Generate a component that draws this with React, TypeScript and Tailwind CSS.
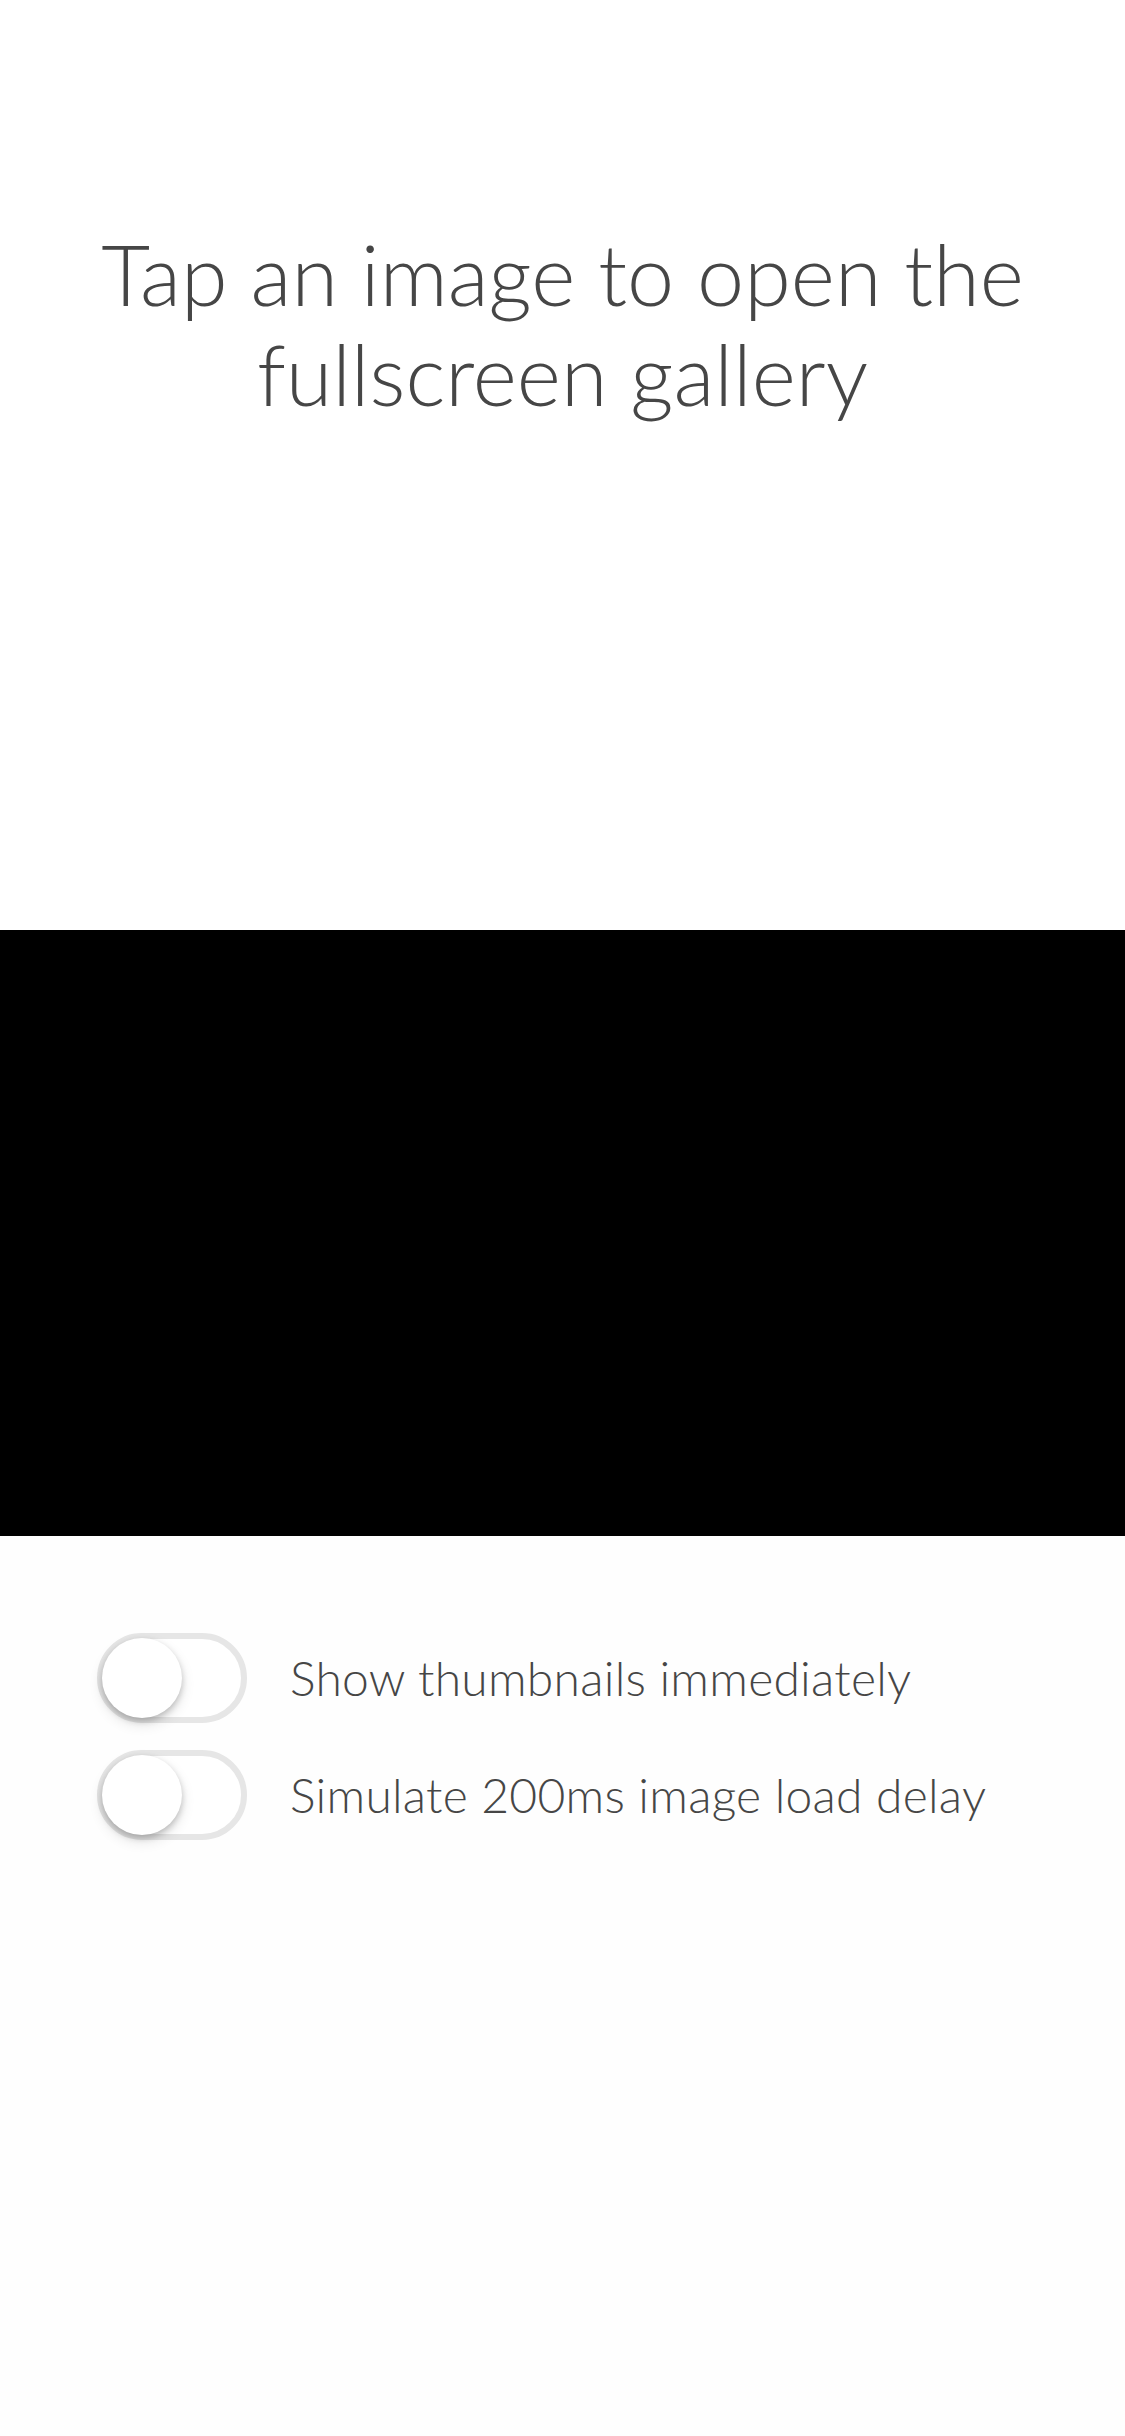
import React from 'react';

const options = [
  'Show thumbnails immediately',
  'Simulate 200ms image load delay',
];

function Toggle() {
  return (
    <div className="relative w-[150px] h-[90px] shrink-0 rounded-full border-[6px] border-[#e6e6e6] bg-white">
      <div className="absolute -left-px -top-px w-[80px] h-[80px] rounded-full bg-white shadow-[0_3px_6px_rgba(0,0,0,0.2),0_6px_14px_rgba(0,0,0,0.12)]" />
    </div>
  );
}

export default function App() {
  return (
    <div className="min-h-[2436px] bg-[#fefefe] font-['Lato',sans-serif] text-[#464646]">
      {/* Header */}
      <div className="h-[930px] bg-white pt-[224px]">
        <h1 className="text-center text-[84.5px] leading-[100px] font-light">
          Tap an image to open the
          <br />
          fullscreen gallery
        </h1>
      </div>

      {/* Gallery strip */}
      <div className="h-[606px] bg-black" />

      {/* Options */}
      <div className="flex flex-col gap-[27px] pt-[97px] pl-[97px]">
        {options.map((label) => (
          <label key={label} className="flex items-center gap-[43px]">
            <Toggle />
            <span className="text-[48px] tracking-[0.25px] font-light">{label}</span>
          </label>
        ))}
      </div>
    </div>
  );
}
